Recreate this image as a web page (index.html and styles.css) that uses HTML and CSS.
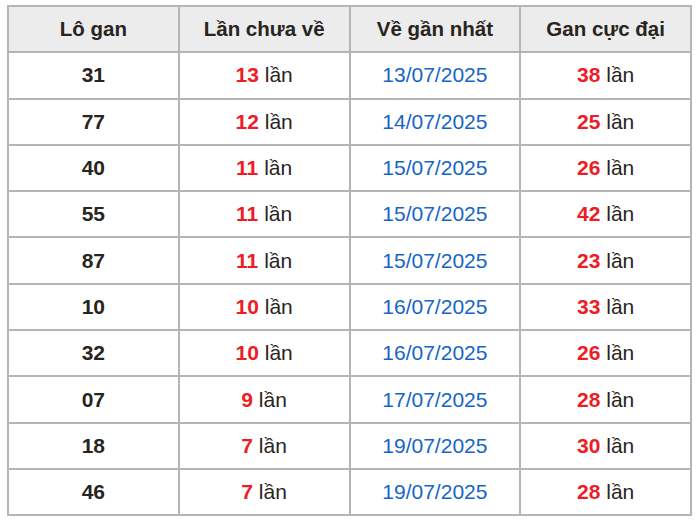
FILE: index.html
```html
<!DOCTYPE html>
<html lang="vi">
<head>
<meta charset="utf-8">
<link rel="stylesheet" href="styles.css">
</head>
<body>
<table class="gan">
<thead>
<tr><th>Lô gan</th><th>Lần chưa về</th><th>Về gần nhất</th><th>Gan cực đại</th></tr>
</thead>
<tbody>
<tr><td class="num">31</td><td><b class="red">13</b> lần</td><td class="date">13/07/2025</td><td><b class="red">38</b> lần</td></tr>
<tr><td class="num">77</td><td><b class="red">12</b> lần</td><td class="date">14/07/2025</td><td><b class="red">25</b> lần</td></tr>
<tr><td class="num">40</td><td><b class="red">11</b> lần</td><td class="date">15/07/2025</td><td><b class="red">26</b> lần</td></tr>
<tr><td class="num">55</td><td><b class="red">11</b> lần</td><td class="date">15/07/2025</td><td><b class="red">42</b> lần</td></tr>
<tr><td class="num">87</td><td><b class="red">11</b> lần</td><td class="date">15/07/2025</td><td><b class="red">23</b> lần</td></tr>
<tr><td class="num">10</td><td><b class="red">10</b> lần</td><td class="date">16/07/2025</td><td><b class="red">33</b> lần</td></tr>
<tr><td class="num">32</td><td><b class="red">10</b> lần</td><td class="date">16/07/2025</td><td><b class="red">26</b> lần</td></tr>
<tr><td class="num">07</td><td><b class="red">9</b> lần</td><td class="date">17/07/2025</td><td><b class="red">28</b> lần</td></tr>
<tr><td class="num">18</td><td><b class="red">7</b> lần</td><td class="date">19/07/2025</td><td><b class="red">30</b> lần</td></tr>
<tr><td class="num">46</td><td><b class="red">7</b> lần</td><td class="date">19/07/2025</td><td><b class="red">28</b> lần</td></tr>
</tbody>
</table>
</body>
</html>
```
FILE: styles.css
```css
html, body {
  margin: 0;
  padding: 0;
  background: #fff;
}
body {
  padding: 5px 0 0 7px;
  font-family: "Liberation Sans", Arial, sans-serif;
  color: #28251e;
}
.gan {
  width: 685px;
  table-layout: fixed;
  border-collapse: collapse;
  border: 2px solid #aaaaaa;
}
.gan th, .gan td {
  border: 2px solid #b5b5b5;
  height: 44.3px;
  padding: 0;
  text-align: center;
  vertical-align: middle;
  font-size: 21px;
}
.gan th {
  background: #ececec;
  font-weight: bold;
  font-size: 20.5px;
}
.num {
  font-weight: bold;
}
.red {
  color: #ee1c25;
}
.date {
  color: #1565c8;
}
```
